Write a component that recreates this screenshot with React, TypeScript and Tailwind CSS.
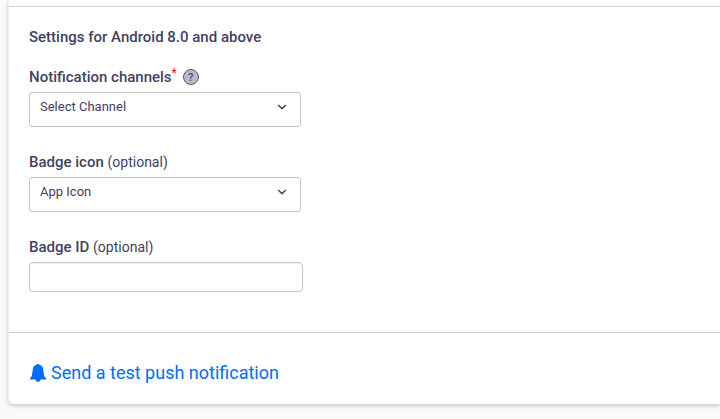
import type { ReactNode } from "react";

interface SelectFieldProps {
  id: string;
  options: string[];
}

function SelectField({ id, options }: SelectFieldProps) {
  return (
    <div className="relative w-[272px] max-w-full">
      <select
        id={id}
        className="block h-[35px] w-full appearance-none rounded-[3px] border border-[#c6c6c8] bg-white pl-2.5 pr-8 pb-1.5 text-[13px] text-[#434262]"
      >
        {options.map((option) => (
          <option key={option}>{option}</option>
        ))}
      </select>
      <svg
        className="pointer-events-none absolute right-3.5 top-2.5 h-2.5 w-2.5"
        viewBox="0 0 10 10"
        fill="none"
        stroke="#4b4a6c"
        strokeWidth="1.7"
      >
        <path d="M1.2 3 5 6.6 8.8 3" />
      </svg>
    </div>
  );
}

function Field({ label, children }: { label: ReactNode; children: ReactNode }) {
  return (
    <div>
      <div className="mb-[5px] flex h-5 items-center text-[15px]">{label}</div>
      {children}
    </div>
  );
}

function BellIcon() {
  return (
    <svg className="h-[18px] w-[18px]" viewBox="0 0 18 18" fill="#006eff">
      <path d="M9 0c.9 0 1.500.4 1.800 1.100 2 .5 3.100 1.800 3.400 4l.9 6.400c.1.900.5 1.400 1.200 2 .6.500.8 1.100.8 1.900h-5.600C11.200 16.800 10.300 17.800 9 17.800s-2.200-1-2.500-2.400H.9c0-.8.2-1.400.8-1.900.7-.6 1.100-1.100 1.200-2l.9-6.400c.3-2.200 1.400-3.500 3.400-4C7.500.4 8.100 0 9 0Z" />
    </svg>
  );
}

function App() {
  return (
    <div className="min-h-screen bg-[#f7f9fb] pb-3.5 pl-2 font-['Roboto',sans-serif] text-[#434262]">
      <main className="rounded-bl-md border-l border-[#eeeff2] bg-white shadow-[0_2px_4px_rgba(0,0,0,0.2)]">
        <div className="h-1.5" />
        <section className="border-y border-[#d0d0d2] px-5 pb-10 pt-5 leading-5">
          <h2 className="mb-5 text-[15px] font-medium">Settings for Android 8.0 and above</h2>
          <div className="space-y-[25px]">
            <Field
              label={
                <>
                  <label htmlFor="channel" className="font-medium">
                    Notification channels
                  </label>
                  <span className="self-start text-xs leading-3 text-[#ff0010]">*</span>
                  <button
                    type="button"
                    aria-label="About notification channels"
                    className="ml-1.5 flex h-4 w-4 items-center justify-center rounded-full border border-[#5a597a] bg-[#b9b8c9] text-[11px] font-medium leading-none text-[#4b4a6c]"
                  >
                    ?
                  </button>
                </>
              }
            >
              <SelectField id="channel" options={["Select Channel"]} />
            </Field>
            <Field
              label={
                <label htmlFor="badge-icon">
                  <span className="font-medium">Badge icon</span> <span className="text-sm">(optional)</span>
                </label>
              }
            >
              <SelectField id="badge-icon" options={["App Icon"]} />
            </Field>
            <Field
              label={
                <label htmlFor="badge-id">
                  <span className="font-medium">Badge ID</span> <span className="text-sm">(optional)</span>
                </label>
              }
            >
              <input
                id="badge-id"
                type="text"
                className="block h-[30px] w-[274px] max-w-full rounded border border-[#c6c6c8] px-2.5 text-[13px] shadow-[inset_0_1px_1px_rgba(0,0,0,0.06)]"
              />
            </Field>
          </div>
        </section>
        <section className="px-5 pb-[19px] pt-7">
          <a href="#test" className="inline-flex h-6 items-center gap-1 align-top text-lg text-[#006eff]">
            <BellIcon />
            Send a test push notification
          </a>
        </section>
      </main>
    </div>
  );
}

export default App;
